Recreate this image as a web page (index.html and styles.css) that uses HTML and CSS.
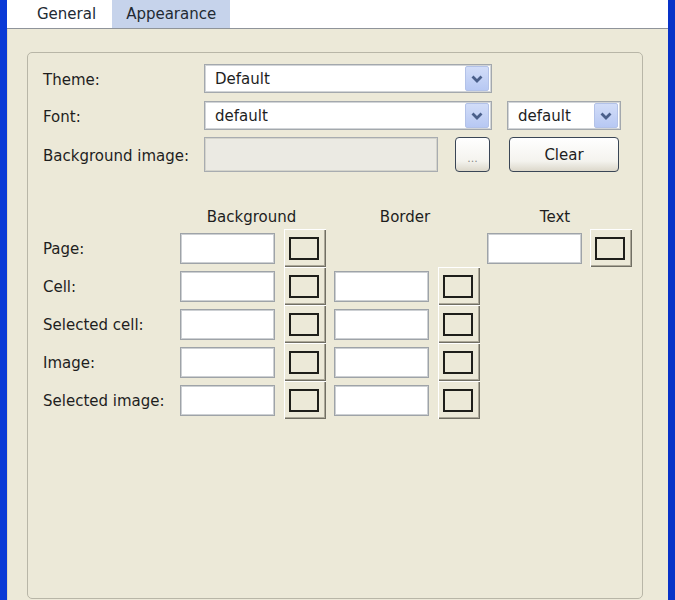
FILE: index.html
```html
<!DOCTYPE html>
<html lang="en">
<head>
  <meta charset="UTF-8" />
  <title>Appearance</title>
  <link rel="stylesheet" href="styles.css">
</head>
<body>

  <div class="window">
    <div class="tabs">
      <span class="tab">General</span>
      <span class="tab active">Appearance</span>
    </div>

    <div class="page">
      <div class="group">

        <div class="form">
          <div class="row r1">
            <span class="label">Theme:</span>
            <div class="select wide"><span>Default</span><i class="drop"><svg viewBox="0 0 14 14"><path d="M2.5 4.5 L7 9 L11.5 4.5"/></svg></i></div>
          </div>
          <div class="row r2">
            <span class="label">Font:</span>
            <div class="select wide"><span>default</span><i class="drop"><svg viewBox="0 0 14 14"><path d="M2.5 4.5 L7 9 L11.5 4.5"/></svg></i></div>
            <div class="select small"><span>default</span><i class="drop"><svg viewBox="0 0 14 14"><path d="M2.5 4.5 L7 9 L11.5 4.5"/></svg></i></div>
          </div>
          <div class="row r3">
            <span class="label">Background image:</span>
            <div class="field disabled"></div>
            <button class="xpbtn dots">...</button>
            <button class="xpbtn clear">Clear</button>
          </div>
        </div>

        <div class="colors">
          <span></span>
          <span class="head">Background</span>
          <span class="head">Border</span>
          <span class="head">Text</span>

          <span class="label">Page:</span>
          <div class="text"></div><button class="pick"><i></i></button>
          <span></span><span></span>
          <div class="text"></div><button class="pick"><i></i></button>

          <span class="label">Cell:</span>
          <div class="text"></div><button class="pick"><i></i></button>
          <div class="text"></div><button class="pick"><i></i></button>
          <span></span><span></span>

          <span class="label">Selected cell:</span>
          <div class="text"></div><button class="pick"><i></i></button>
          <div class="text"></div><button class="pick"><i></i></button>
          <span></span><span></span>

          <span class="label">Image:</span>
          <div class="text"></div><button class="pick"><i></i></button>
          <div class="text"></div><button class="pick"><i></i></button>
          <span></span><span></span>

          <span class="label">Selected image:</span>
          <div class="text"></div><button class="pick"><i></i></button>
          <div class="text"></div><button class="pick"><i></i></button>
          <span></span><span></span>
        </div>

      </div>
    </div>
  </div>

</body>
</html>
```

FILE: styles.css
```css
* {
  margin: 0;
  padding: 0;
  box-sizing: border-box;
}

body {
  background-color: #ece9d8;
  font-family: "DejaVu Sans", Verdana, sans-serif;
  font-size: 15px;
  color: #1e1e1e;
  height: 100vh;
  overflow: hidden;
}

.window {
  height: 100vh;
  border-left: 7px solid #0a3ad6;
  border-right: 7px solid #0832c8;
  box-shadow: inset 1px 0 0 #ded9c4;
}

.tabs {
  height: 29px;
  background: #fff;
  border-bottom: 1px solid #8f949a;
  padding-left: 17px;
  display: flex;
}

.tab {
  padding: 0 13px;
  margin-right: 3px;
  line-height: 28px;
  color: #222a33;
}

.tab.active {
  padding: 0 14px;
  background-color: #c6d3eb;
}

.page {
  padding: 23px 25px 0 20px;
}

.group {
  height: 547px;
  border: 1px solid #b8b6a7;
  border-radius: 5px;
  padding: 11px 0 0 15px;
}

.label {
  padding-top: 2px;
}

/* top form */

.row {
  display: flex;
  align-items: center;
}

.row .label {
  width: 161px;
}

.r1, .r2 {
  height: 29px;
}

.r2 {
  margin-top: 8px;
}

.r3 {
  margin-top: 7px;
  height: 35px;
}

.select {
  height: 29px;
  background: #fff;
  border: 1px solid #a3a8ad;
  box-shadow: inset 0 0 0 1px #d2d5d8;
  display: flex;
  align-items: center;
  padding: 2px 2px 2px 10px;
}

.select span {
  flex: 1;
  padding-top: 1px;
}

.select.wide {
  width: 288px;
}

.select.small {
  width: 114px;
  margin-left: 15px;
}

.drop {
  flex: none;
  width: 24px;
  height: 25px;
  background: linear-gradient(#d2ddf8, #b7c8f3);
  border: 1px solid #b3c2e8;
  border-radius: 2px;
  display: flex;
  align-items: center;
  justify-content: center;
}

.drop svg {
  width: 14px;
  height: 14px;
  fill: none;
  stroke: #4a5f8a;
  stroke-width: 2.8;
}

.field.disabled {
  width: 234px;
  height: 35px;
  background: #ebeae3;
  border: 1px solid #a8acb0;
  box-shadow: inset 0 0 0 1px #d4d4cc;
}

.xpbtn {
  height: 35px;
  font: inherit;
  color: #1e1e1e;
  background: linear-gradient(#ffffff, #f4f3ee 70%, #dcd8cb);
  border: 1px solid #3a4656;
  border-radius: 4px;
  cursor: pointer;
}

.xpbtn.dots {
  width: 35px;
  margin-left: 17px;
  font-size: 11px;
  color: #8a8a8a;
  padding-top: 8px;
}

.xpbtn.clear {
  width: 110px;
  margin-left: 19px;
}

/* color table */

.colors {
  margin-top: 33px;
  display: grid;
  grid-template-columns: 137px 104px 50px 104px 49px 103px 44px;
  grid-template-rows: 24px repeat(5, 38px);
  align-items: center;
}

.colors .head {
  grid-column: span 2;
  text-align: center;
  padding: 0 11px 0 0;
}

.text {
  width: 95px;
  height: 31px;
  background: #fff;
  border: 1px solid #9ea3a8;
  box-shadow: inset 0 0 0 1px #cdd0d3;
}

.pick {
  width: 42px;
  height: 38px;
  background: #ece9d8;
  border: none;
  box-shadow: inset 1px 1px 0 #fff, inset -1px -1px 0 #716f64, inset -2px -2px 0 #aca899;
  display: flex;
  align-items: center;
  justify-content: center;
  padding: 1px 2px 0 0;
  cursor: pointer;
}

.pick i {
  width: 30px;
  height: 23px;
  border: 2px solid #1e1e1a;
}
```
